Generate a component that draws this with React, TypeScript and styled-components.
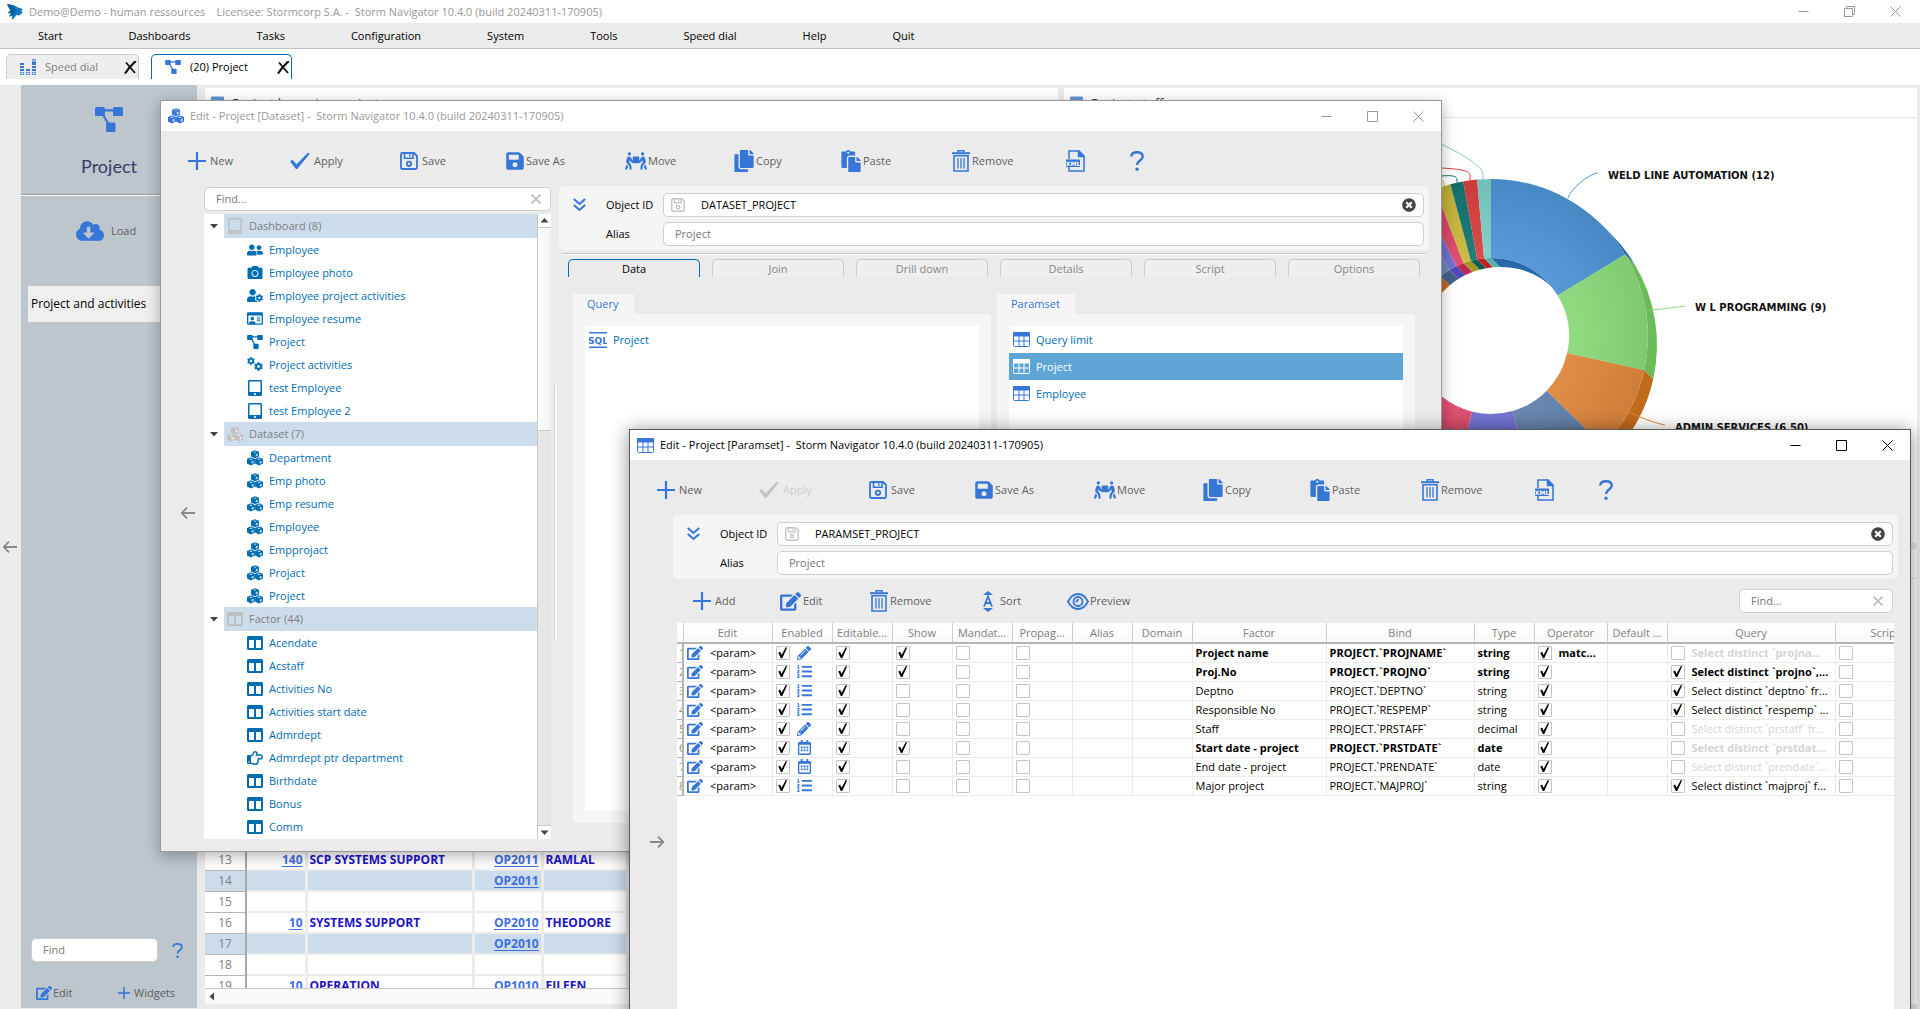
import React from "react";
import styled, { createGlobalStyle, css } from "styled-components";
import {
  FaSave, FaPeopleCarry, FaCopy, FaPaste, FaCloudDownloadAlt,
  FaEdit, FaTabletAlt, FaUserFriends, FaCamera, FaUserCog, FaRegIdCard, FaColumns,
  FaRegHandPointRight, FaPencilAlt, FaListOl, FaRegCalendarAlt, FaTimesCircle, FaCog,
} from "react-icons/fa";

const BLUE = "#3676d8";
const LINK = "#006db3";
const GREY = "#ebebeb";
const PALE = "#ccdceb";
const LINE = "#cfcfcf";

const Global = createGlobalStyle`
  *, *::before, *::after { box-sizing: border-box; }
  body { margin: 0; background: ${GREY}; color: #000; overflow: hidden;
    font: 11px/16px "Open Sans", "Noto Sans", sans-serif; }
  button, input { font: inherit; color: inherit; }
  button { border: 0; background: none; padding: 0; }
  svg { display: block; flex: none; }
`;

/* ---------- drawn icons ---------- */
const Plus = ({ size = 18 }) => (
  <svg width={size} height={size} viewBox="0 0 18 18" stroke="currentColor" strokeWidth="2.2"><path d="M9 0v18M0 9h18" /></svg>
);
const Tick = () => (
  <svg width="20" height="16" viewBox="0 0 20 16" fill="currentColor"><path d="M0 8.6l2.4-1.9 4.2 4.6L17.600 0 20 .6 7.200 16H6z" /></svg>
);
const Bin = () => (
  <svg width="18" height="22" viewBox="0 0 18 22" fill="none" stroke="currentColor">
    <path d="M0 3.200h18" strokeWidth="2" /><path d="M6 2.500V.7h6v1.800" strokeWidth="1.400" />
    <path d="M2 5.700h14v15.300H2z" strokeWidth="1.600" /><path d="M6 8v10.500M9 8v10.500M12 8v10.500" strokeWidth="1.300" />
  </svg>
);
const Floppy = ({ size = 18 }) => (
  <svg width={size} height={size} viewBox="0 0 18 18" fill="none" stroke="currentColor" strokeWidth="1.800">
    <path d="M1 2.200Q1 1 2.200 1H14l3 3v11.800q0 1.200-1.200 1.200H2.200Q1 17 1 15.800z" strokeLinejoin="round" />
    <path d="M4.500 1v5.200h8.500V1M9.800 2.500v2" strokeWidth="1.600" /><circle cx="9" cy="11.800" r="2.200" />
  </svg>
);
const Nodes = ({ size = 16 }) => (
  <svg width={size} height={Math.round(size * 0.9)} viewBox="0 0 28 25" fill="currentColor">
    <rect width="10" height="9" rx="1.500" /><rect x="18" width="10" height="9" rx="1.500" /><rect x="11" y="15.500" width="9.500" height="9.500" rx="1.500" />
    <path d="M9 3.400h10M7.500 7l6 10" stroke="currentColor" strokeWidth="2.200" fill="none" />
  </svg>
);
const Gears = () => (
  <svg width="16" height="15" viewBox="0 0 16 15"><FaCog x={0} y={0} size={8} /><FaCog x={7} y={5} size={9} /></svg>
);
const Cube = ({ x, y }: { x: number; y: number }) => (
  <g transform={`translate(${x} ${y})`}>
    <path d="M4.300 0l4.300 1.800v5L4.300 8.800 0 6.800v-5z" fill="currentColor" />
    <path d="M4.300 1.300l2 .8-2 .8-2-.8zM5.100 7V4.600l2-.9v2.400z" fill="#fff" fillOpacity=".8" />
  </g>
);
const Cubes = ({ size = 16 }) => (
  <svg width={size} height={size} viewBox="0 0 17.400 17"><Cube x={4.400} y={0} /><Cube x={0} y={7.800} /><Cube x={8.800} y={7.800} /></svg>
);
const Help = ({ w = 14, h = 20 }) => (
  <svg width={w} height={h} viewBox="0 0 14 20" fill="none" stroke="currentColor" strokeWidth="2.400">
    <path d="M1.200 5.500C1.500 2.600 3.900 1.200 7 1.200c3.400 0 5.700 1.700 5.700 4.300 0 4.200-5.600 4-5.600 8.500" />
    <circle cx="7" cy="18.200" r="1.700" fill="currentColor" stroke="none" />
  </svg>
);
const XmlFile = () => (
  <svg width="19" height="22" viewBox="0 0 19 22" fill="none" stroke="currentColor" strokeWidth="1.500">
    <path d="M3 9V1h10l5 5v15H3v-4" /><path d="M12.500 1v5.500H18z" fill="currentColor" />
    <rect x="0" y="9.500" width="14" height="7.500" fill="currentColor" stroke="none" />
    <text x="7" y="15.500" textAnchor="middle" fontSize="6" fontWeight="700" fill="#fff" stroke="none" fontFamily="DejaVu Sans">XML</text>
  </svg>
);
const GridIcon = ({ w = 17, h = 15 }) => (
  <svg width={w} height={h} viewBox="0 0 17 15" fill="none" stroke="currentColor" strokeWidth="1">
    <rect x=".5" y=".5" width="16" height="14" rx="1" /><path d="M.5.5h16v3.500H.5z" fill="currentColor" />
    <path d="M6 4v10.500M11 4v10.500M.5 9h16" />
  </svg>
);
const Chevrons = () => (
  <svg width="13" height="14" viewBox="0 0 13 14" fill="none" stroke={BLUE} strokeWidth="2"><path d="M.8 1l5.700 5 5.700-5M.8 7l5.700 5 5.700-5" /></svg>
);
const Arrow = ({ flip = false }) => (
  <svg width="14" height="12" viewBox="0 0 14 12" fill="none" stroke="#888" strokeWidth="1.800">
    <path d={flip ? "M0 6h13M8 .6L13.200 6 8 11.400" : "M14 6H1M6 .6L.8 6 6 11.400"} />
  </svg>
);
const Cross = ({ color = "#bdbdbd", size = 10 }) => (
  <svg width={size} height={size} viewBox="0 0 10 10" stroke={color} strokeWidth="1.700"><path d="M.5.5l9 9M9.500.5l-9 9" /></svg>
);
const TabCross = () => (
  <svg width="13" height="13" viewBox="0 0 13 13" fill="none" stroke="#111"><path d="M2 1.500L11 12" strokeWidth="1.800" /><path d="M11.800 0C8 3.500 4 8 1 12.500" strokeWidth="2.200" /></svg>
);
const SortIcon = () => (
  <svg width="12" height="21" viewBox="0 0 12 21" fill="currentColor">
    <path d="M6 0l5 4H1zM6 21l5-4H1z" /><path d="M2 15.500L6 5.500l4 10M3.600 12h4.800" fill="none" stroke="currentColor" strokeWidth="1.800" />
  </svg>
);
const EyeIcon = () => (
  <svg width="22" height="19" viewBox="0 0 22 17" fill="none" stroke="currentColor" strokeWidth="1.800">
    <path d="M1 8.500C3.500 3.500 7 1 11 1s7.500 2.500 10 7.500c-2.500 5-6 7.500-10 7.500S3.500 13.500 1 8.500z" /><circle cx="11" cy="8.500" r="4.500" />
    <path d="M8.600 8.500A2.400 2.400 0 0 0 11 6" />
  </svg>
);
const DialIcon = () => (
  <svg width="16" height="16" viewBox="0 0 16 16" fill={BLUE}>
    <path d="M0 4h4v2H0zM0 7h4v2H0zM0 10h4v2H0zM6 10h4v2H6zM12 3h4v3h-4zM12 7h4v2h-4zM12 10h4v2h-4z" />
    <path d="M.4 13.400h3.200v2.200H.4zM6.400 13.400h3.200v2.200H6.400zM12.400 13.400h3.200v2.200h-3.200zM12.400.4h3.200v2h-3.200z" fill="none" stroke={BLUE} strokeWidth=".8" />
  </svg>
);
const Logo = () => (
  <svg width="16" height="16" viewBox="0 0 16 16">
    <path d="M0 0c4 .5 8 1 11 3.500L16 5l-1.500 1.500L15.500 9 12 11.500 9.500 11 6 15.500 4.500 14l1-2L2 12.500l2-3L.5 8.500l3-1.500L0 0z" fill="#1a78c0" />
    <path d="M0 0c4 .5 8 2 9 6.500L7.500 10 2 12.500l2-3L.5 8.500l3-1.500z" fill="#0a5fa0" />
  </svg>
);
const SqlIcon = () => (
  <svg width="18" height="16" viewBox="0 0 18 16" fill="none" stroke={BLUE}>
    <path d="M0 .8h18M0 15.200h18" strokeWidth="1.400" />
    <text x="9" y="12" textAnchor="middle" fontSize="9" fontWeight="700" fill={BLUE} stroke="none" fontFamily="DejaVu Sans">SQL</text>
  </svg>
);

/* ---------- shared parts ---------- */
const TitleBar = styled.header<{ $h: number; $color: string }>`
  display: flex; align-items: center; height: ${(p) => p.$h}px; flex: none; background: #fff;
  color: ${(p) => p.$color}; white-space: pre; padding-left: 7px; gap: 6px;
`;
const TitleIcon = styled.span`color: ${BLUE};`;
const TitleText = styled.span`flex: 1;`;
const CaptionButton = styled.button`
  width: 46px; height: 22px; display: flex; align-items: center; justify-content: center; margin: 0;
`;
const CaptionGroup = styled.div<{ $inset?: number }>`display: flex; padding-right: ${(p) => p.$inset || 0}px;`;

function Captions({ restored = false, inset = 0 }) {
  const s = { width: 11, height: 11, viewBox: "0 0 11 11", fill: "none", stroke: "currentColor" };
  return (
    <CaptionGroup $inset={inset}>
      <CaptionButton aria-label="Minimise"><svg {...s}><path d="M.5 5.500h10" /></svg></CaptionButton>
      <CaptionButton aria-label="Maximise">
        <svg {...s}><path d={restored ? "M.5 2.500h8v8h-8zM2.500 2.500v-2h8v8h-2" : "M.5.5h10v10H.5z"} /></svg>
      </CaptionButton>
      <CaptionButton aria-label="Close"><svg {...s}><path d="M.5.5l10 10M10.500.5l-10 10" /></svg></CaptionButton>
    </CaptionGroup>
  );
}

const ToolBar = styled.div<{ $cols: string; $h: number; $pad: number; $top?: number }>`
  display: grid; grid-template-columns: ${(p) => p.$cols}; align-items: center; flex: none;
  height: ${(p) => p.$h}px; padding-left: ${(p) => p.$pad}px; padding-top: ${(p) => p.$top || 0}px; color: ${BLUE};
`;
const ToolButton = styled.button<{ $gap: number }>`
  display: flex; align-items: center; gap: ${(p) => p.$gap}px; white-space: nowrap; justify-self: start;
  &:disabled { color: #c4c4c4; }
`;
const ToolLabel = styled.span`color: #5f5f5f; button:disabled & { color: #cfcfcf; }`;

const Tool = ({ icon, label, gap = 4, disabled = false, name }: { icon: React.ReactNode; label?: string; gap?: number; disabled?: boolean; name?: string }) => (
  <ToolButton $gap={gap} disabled={disabled} aria-label={name}>{icon}{label && <ToolLabel>{label}</ToolLabel>}</ToolButton>
);

const boxed = css`border: 1px solid ${LINE}; border-radius: 5px; background: #fff;`;
const Field = styled.div<{ $w?: number }>`
  ${boxed} display: flex; align-items: center; height: 24px; padding: 0 9px 0 7px; min-width: 0;
  width: ${(p) => (p.$w ? p.$w + "px" : "auto")};
`;
const FieldInput = styled.input<{ $pad: number; $muted?: boolean }>`
  flex: 1; min-width: 0; border: 0; outline: 0; background: none; padding: 0 0 0 ${(p) => p.$pad}px;
  color: ${(p) => (p.$muted ? "#777" : "#000")}; &::placeholder { color: #777; opacity: 1; }
`;
const FieldIcon = styled.span`color: #c4c4c4;`;
const PlainButton = styled.button`display: flex;`;

/* ---------- main window ---------- */
const Screen = styled.div`position: relative; height: 100vh; display: flex; flex-direction: column; overflow: hidden;`;
const MenuBar = styled.nav`
  display: flex; align-items: center; gap: 66px; height: 26px; flex: none; padding-left: 38px;
  background: ${GREY}; border-bottom: 1px solid #c2c2c2;
`;
const PageTabs = styled.div`display: flex; gap: 12px; align-items: flex-start; height: 36px; flex: none; padding: 5px 6px 0; background: #fff;`;
const PageTab = styled.div<{ $active?: boolean; $w: number }>`
  display: flex; align-items: center; width: ${(p) => p.$w}px; height: 25px; padding: 0 1px 0 13px;
  border: 1px solid ${(p) => (p.$active ? LINK : "#ccc")}; border-bottom: 0; border-radius: 5px 5px 0 0;
  background: ${(p) => (p.$active ? "#fff" : "#eee")}; color: ${(p) => (p.$active ? "#000" : "#808080")};
`;
const PageTabIcon = styled.span`color: ${BLUE};`;
const PageTabLabel = styled.button`flex: 1; text-align: left; padding-left: 9px;`;
const Desk = styled.div`flex: 1; min-height: 0; display: flex; padding-bottom: 1px;`;
const Strip = styled.div<{ $w: number; $right: number }>`
  width: ${(p) => p.$w}px; flex: none; display: flex; align-items: center; justify-content: flex-end; padding-right: ${(p) => p.$right}px;
`;
const SideBar = styled.aside`width: 176px; flex: none; background: #bdc5cd; display: flex; flex-direction: column;`;
const SideHead = styled.div`
  display: flex; flex-direction: column; align-items: center; gap: 22px; height: 111px; padding-top: 22px; color: ${BLUE};
  border-bottom: 1px solid #fff; box-shadow: inset 0 -1px 0 #9b9b9b;
`;
const SideTitle = styled.h1`margin: 0; font: 400 18px/24px Lato, "Open Sans", sans-serif; color: #3a3a66;`;
const LoadButton = styled.button`display: flex; align-items: center; gap: 7px; height: 70px; padding-left: 55px; color: ${BLUE};`;
const SideItem = styled.button`margin: 20px 0 0 7px; height: 36px; padding-left: 3px; text-align: left; background: #efefef; font-size: 12px;`;
const SideFoot = styled.div`margin-top: auto; padding: 0 14px 7px 10px; display: flex; flex-direction: column; gap: 23px; color: ${BLUE};`;
const SideRow = styled.div<{ $l?: number; $r?: number }>`
  display: flex; align-items: center; justify-content: space-between; padding: 0 ${(p) => p.$r || 0}px 0 ${(p) => p.$l || 0}px;
`;
const Boards = styled.main`
  flex: 1; min-width: 0; display: grid; grid-template: 1fr 1fr / 1fr 1fr; gap: 6px; padding: 3px 3px 4px 8px;
`;
const Board = styled.section`display: flex; flex-direction: column; background: #fff; overflow: hidden; min-width: 0; min-height: 0;`;
const BoardHead = styled.h2`
  display: flex; align-items: center; gap: 8px; height: 30px; flex: none; margin: 0; padding-left: 6px;
  border-bottom: 1px solid #e6e6e6; font: 13px/18px "Open Sans", sans-serif; color: #2f2f5e; svg { color: #5f90dc; }
`;

const Scroll = styled.div`flex: 1; min-height: 0; overflow: hidden;`;
const Sheet = styled.table`
  border-collapse: collapse; table-layout: fixed; width: 853px; font-size: 12px;
  th, td { height: 21px; padding: 0 2px; border: solid #ececec; border-width: 0 3px 2px 0; overflow: hidden; white-space: nowrap; }
  thead th { height: 18px; border-width: 0; }
  tbody th { border-right: 2px solid #a9a9a9; border-bottom: 1px solid #b5b5b5; font-weight: 400; color: #808080; text-align: center; }
  td { font-weight: 700; color: #1b12c9; text-align: left; }
`;
const SheetRow = styled.tr<{ $tint: boolean }>`${(p) => p.$tint && css`background: ${PALE};`}`;
const SheetCell = styled.td<{ $right?: boolean }>`&& { text-align: ${(p) => (p.$right ? "right" : "left")}; }`;
const SheetLink = styled.a`color: #3f6fe0; text-decoration: underline; text-underline-offset: 2px;`;
const HScroll = styled.div`
  height: 16px; flex: none; display: flex; align-items: center; border-top: 1px solid #c8c8c8; background: #fafafa; padding-left: 3px;
`;
const Tri = styled.span<{ $dir: "up" | "down" | "left" }>`
  width: 8px; height: 8px; background: #444;
  clip-path: ${(p) => ({ up: "polygon(50% 20%,100% 75%,0 75%)", down: "polygon(0 25%,100% 25%,50% 80%)", left: "polygon(75% 0,75% 100%,20% 50%)" }[p.$dir])};
`;

type SRow = [string, string, string, string];
const emptyRow: SRow = ["", "", "", ""];
const sheetRows: SRow[] = [
  ...Array(12).fill(emptyRow),
  ["140", "SCP SYSTEMS SUPPORT", "OP2011", "RAMLAL"],
  ["", "", "OP2011", ""],
  emptyRow,
  ["10", "SYSTEMS SUPPORT", "OP2010", "THEODORE"],
  ["", "", "OP2010", ""],
  emptyRow,
  ["10", "OPERATION", "OP1010", "EILEEN"],
];

/* ---------- donut chart ---------- */
const ChartText = styled.text`font: 700 10px "DejaVu Sans", sans-serif; fill: #111;`;
const CX = 427, CY = 218, RO = 157, RI = 78, DEPTH = 9;
const palette: Record<string, [string, string]> = {
  blue: ["#4d92d4", "#2668a8"], green: ["#89d878", "#6cbb5b"], orange: ["#df863c", "#c26a1c"], slate: ["#5f80aa", "#44648c"],
  violet: ["#6b6bd0", "#5048b8"], pink: ["#dd4569", "#bd2850"], yellow: ["#c9b738", "#a9981f"], teal: ["#147572", "#0c5c59"],
  red: ["#db3e3e", "#c02020"], mint: ["#7acdc4", "#56b5aa"],
};
const slices: [string, number, number][] = [
  ["blue", 0, 58.7], ["green", 58.7, 102.6], ["orange", 102.6, 134.5], ["slate", 134.5, 164], ["violet", 164, 194],
  ["pink", 194, 219], ["yellow", 219, 240], ["teal", 240, 258], ["red", 258, 272], ["mint", 272, 285], ["blue", 285, 297],
  ["green", 297, 308], ["orange", 308, 320], ["slate", 320, 328], ["violet", 328, 333.7], ["pink", 333.7, 339.3],
  ["yellow", 339.3, 345], ["teal", 345, 349.8], ["red", 349.8, 354.9], ["mint", 354.9, 360],
];
const pt = (r: number, a: number, o = 0) => {
  const t = (a * Math.PI) / 180;
  return `${CX + o + r * Math.sin(t)} ${CY + o - r * Math.cos(t)}`;
};
const face = (a: number, b: number) =>
  `M${pt(RO, a)}A${RO} ${RO} 0 0 1 ${pt(RO, b)}L${pt(RI, b)}A${RI} ${RI} 0 0 0 ${pt(RI, a)}Z`;
const wall = (r: number, a: number, b: number) =>
  `M${pt(r, a)}A${r} ${r} 0 0 1 ${pt(r, b)}L${pt(r, b, DEPTH)}A${r} ${r} 0 0 0 ${pt(r, a, DEPTH)}Z`;

const Donut = () => (
  <svg width="853" height="425" viewBox="0 0 853 425" role="img" aria-label="Project staff by department">
    <defs>
      <radialGradient id="shade" gradientUnits="userSpaceOnUse" cx={CX} cy={CY} r={RO}>
        <stop offset=".5" stopColor="#fff" stopOpacity=".06" /><stop offset="1" stopColor="#000" stopOpacity=".07" />
      </radialGradient>
    </defs>
    {slices.filter(([, a, b]) => b > 45 && a < 225).map(([c, a, b]) => (
      <path key={"o" + a} d={wall(RO, Math.max(a, 45), Math.min(b, 225))} fill={palette[c][1]} />
    ))}
    <path d={wall(RI, 0, 45)} fill={palette.blue[1]} />
    {slices.filter(([, , b]) => b > 225).map(([c, a, b]) => (
      <path key={"i" + a} d={wall(RI, Math.max(a, 225), b)} fill={palette[c][1]} />
    ))}
    {slices.map(([c, a, b]) => <path key={"f" + a} d={face(a, b)} fill={palette[c][0]} />)}
    <path d={face(0, 180) + face(180, 360)} fill="url(#shade)" />
    <g fill="none" strokeWidth="1">
      <path d="M377 26C400 37 419 49 419 56v6" stroke={palette.mint[0]} />
      <path d="M377 50c20 1 29 3 29 7v6" stroke={palette.red[0]} />
      <path d="M377 58c12-1 16 0 16 4v4" stroke={palette.teal[0]} />
      <path d="M377 62c3 0 3 4 3 6" stroke={palette.yellow[0]} />
      <path d="M504 80c2-8 20-24 30-25" stroke={palette.blue[0]} />
      <path d="M581 193l40-5" stroke={palette.green[0]} />
      <path d="M564 293c8 5 26 12 37 14" stroke={palette.orange[0]} />
    </g>
    <ChartText x="544" y="61">WELD LINE AUTOMATION (12)</ChartText>
    <ChartText x="631" y="193">W L PROGRAMMING (9)</ChartText>
    <ChartText x="611" y="313">ADMIN SERVICES (6.50)</ChartText>
  </svg>
);

/* ---------- dialogs ---------- */
const Dialog = styled.section<{ $front?: boolean }>`
  position: absolute; width: 1282px; height: 752px; display: flex; flex-direction: column; background: ${GREY};
  border: 1px solid ${(p) => (p.$front ? "#5a5a5a" : "#999")};
  box-shadow: ${(p) => (p.$front ? "0 2px 18px rgba(0,0,0,.45)" : "0 4px 14px rgba(0,0,0,.3)")};
  ${(p) => (p.$front ? css`left: 629px; top: 429px;` : css`left: 160px; top: 100px;`)}
`;
const DialogBody = styled.div`flex: 1; min-height: 0; display: flex; padding: 0 12px 12px 0;`;
const Column = styled.div`flex: 1; min-width: 0; display: flex; flex-direction: column;`;

const FormPanel = styled.div`
  display: grid; grid-template: 24px 24px / 33px 57px 1fr; gap: 5px 0; align-items: center;
  padding: 7px 5px 4px 14px; background: #f5f5f5; border-radius: 5px; flex: none;
`;
const FormLabel = styled.label`grid-column: 2;`;
const FormField = styled(Field)`grid-column: 3; padding-right: 7px;`;

function IdForm({ id, value }: { id: string; value: string }) {
  return (
    <FormPanel>
      <PlainButton aria-label="Expand"><Chevrons /></PlainButton>
      <FormLabel htmlFor={id + "-id"}>Object ID</FormLabel>
      <FormField>
        <FieldIcon><Floppy size={14} /></FieldIcon>
        <FieldInput id={id + "-id"} $pad={16} defaultValue={value} />
        <PlainButton aria-label="Clear"><FaTimesCircle size={14} color="#444" /></PlainButton>
      </FormField>
      <FormLabel htmlFor={id + "-alias"}>Alias</FormLabel>
      <FormField><FieldInput id={id + "-alias"} $pad={4} $muted defaultValue="Project" /></FormField>
    </FormPanel>
  );
}

const mainCols = "102px 110px 105px 120px 108px 107px 112px 114px 64px 1fr";
const MainTools = ({ applyOff = false }) => (
  <ToolBar $cols={mainCols} $h={55} $pad={27} $top={4}>
    <Tool icon={<Plus />} label="New" />
    <Tool icon={<Tick />} label="Apply" disabled={applyOff} />
    <Tool icon={<Floppy />} label="Save" />
    <Tool icon={<FaSave size={20} />} label="Save As" gap={1} />
    <Tool icon={<FaPeopleCarry size={22} />} label="Move" gap={1} />
    <Tool icon={<FaCopy size={22} />} label="Copy" gap={1} />
    <Tool icon={<FaPaste size={22} />} label="Paste" gap={1} />
    <Tool icon={<Bin />} label="Remove" gap={2} />
    <Tool icon={<XmlFile />} name="XML" />
    <Tool icon={<Help />} name="Help" />
  </ToolBar>
);

/* tree */
const TreeColumn = styled.div`width: 347px; flex: none; display: flex; flex-direction: column; gap: 3px; padding-top: 1px;`;
const TreeFrame = styled.div`flex: 1; min-height: 0; display: flex; background: #fff;`;
const TreeList = styled.ul`flex: 1; margin: 0; padding: 0; list-style: none; overflow: hidden; color: ${LINK};`;
const TreeGroup = styled.li`
  display: flex; align-items: center; height: 24px; padding-left: 6px; color: #808080;
  background: linear-gradient(90deg, #fff 20px, ${PALE} 20px);
`;
const TreeGroupLabel = styled.span`display: flex; align-items: center; gap: 6px; padding-left: 9px; > svg { color: #c0c0c0; width: 16px; }`;
const TreeLeaf = styled.li`display: flex; align-items: center; gap: 6px; height: 23px; padding-left: 43px; > svg { width: 16px; }`;
const VScroll = styled.div`
  width: 14px; flex: none; border-left: 1px solid #c8c8c8; display: flex; flex-direction: column; background: #e6e6e6;
`;
const VButton = styled.button`height: 14px; flex: none; display: flex; align-items: center; justify-content: center; background: #fff; border: solid #c8c8c8; border-width: 0 0 1px;
  &:last-child { border-width: 1px 0 0; }`;
const VThumb = styled.div`height: 34%; background: linear-gradient(90deg, #fff, #f2f2f2); border-bottom: 1px solid #c8c8c8;`;
const VTrack = styled.div`flex: 1; min-height: 0;`;
const Splitter = styled.div`width: 8px; flex: none; display: flex; align-items: center; justify-content: center;
  &::before { content: ""; width: 3px; height: 255px; border: solid #d6d6d6; border-width: 0 0 0 1px; background: #f7f7f7; }`;

const groups: { name: string; icon: React.ReactNode; items: [string, React.ReactNode][] }[] = [
  {
    name: "Dashboard (8)", icon: <FaTabletAlt size={16} />,
    items: [
      ["Employee", <FaUserFriends size={16} />], ["Employee photo", <FaCamera size={15} />],
      ["Employee project activities", <FaUserCog size={15} />], ["Employee resume", <FaRegIdCard size={15} />],
      ["Project", <Nodes />], ["Project activities", <Gears />],
      ["test Employee", <FaTabletAlt size={16} />], ["test Employee 2", <FaTabletAlt size={16} />],
    ],
  },
  {
    name: "Dataset (7)", icon: <Cubes />,
    items: ["Department", "Emp photo", "Emp resume", "Employee", "Empprojact", "Projact", "Project"].map((n) => [n, <Cubes />]),
  },
  {
    name: "Factor (44)", icon: <FaColumns size={16} />,
    items: ["Acendate", "Acstaff", "Activities No", "Activities start date", "Admrdept", "Admrdept ptr department", "Birthdate", "Bonus", "Comm"].map(
      (n) => [n, n.includes("ptr") ? <FaRegHandPointRight size={16} /> : <FaColumns size={16} />]
    ),
  },
];

const Rule = styled.hr`margin: 3px 3px 4px; width: auto; border: 0; border-top: 1px solid #c2c2c2; border-bottom: 1px solid #fff; height: 2px; flex: none;`;
const FormTabs = styled.div`display: flex; gap: 12px; padding: 0 9px;`;
const FormTab = styled.button<{ $active?: boolean }>`
  flex: 1; height: 18px; border: 1px solid ${(p) => (p.$active ? LINK : "#ccc")}; border-bottom: 0; border-radius: 5px 5px 0 0;
  color: ${(p) => (p.$active ? "#000" : "#888")}; background: ${(p) => (p.$active ? "none" : "#eee")};
`;
const GroupRow = styled.div`flex: 1; min-height: 0; display: flex; gap: 6px; padding: 17px 14px 16px;`;
const GroupBox = styled.div`flex: 1; display: flex; flex-direction: column; align-items: flex-start;`;
const GroupName = styled.h3`margin: 0; padding: 0 15px 0 14px; font: inherit; line-height: 20px; color: ${BLUE}; background: #f5f5f5;`;
const GroupPanel = styled.div`align-self: stretch; flex: 1; padding: 12px; background: #f5f5f5; border-radius: 0 3px 3px 3px; display: flex;`;
const ItemList = styled.ul`flex: 1; margin: 0; padding: 0; list-style: none; background: #fff;`;
const Item = styled.li<{ $on?: boolean }>`
  display: flex; align-items: center; gap: 6px; height: 27px; padding-left: 4px;
  color: ${(p) => (p.$on ? "#fff" : LINK)}; background: ${(p) => (p.$on ? "#5fa5d5" : "none")};
  svg { color: ${(p) => (p.$on ? "#fff" : BLUE)}; }
`;

/* parameter grid */
const Grid = styled.div`flex: 1; min-height: 0; overflow: hidden; background: #fff; margin: 0 4px;`;
const ParamTable = styled.table`
  border-collapse: collapse; table-layout: fixed; width: 1258px;
  th, td { height: 19px; padding: 0 3px; border: solid #ececec; border-width: 0 1px 1px 0; overflow: hidden; white-space: nowrap; text-overflow: ellipsis; text-align: left; line-height: 16px; }
  thead th { height: 20px; font-weight: 400; color: #808080; text-align: center; border-right-color: #cfcfcf; border-bottom: 2px solid #b5b5b5; background: linear-gradient(#fff, #f8f8f8); }
  tbody th { padding: 0 0 0 2px; font-weight: 400; color: #a08878; text-overflow: clip; border-right: 2px solid #b5b5b5; border-bottom-color: #b5b5b5; }
`;
const ParamRow = styled.tr<{ $bold: boolean }>`font-weight: ${(p) => (p.$bold ? 700 : 400)};`;
const Cell = styled.span<{ $dim?: boolean; $plain?: boolean }>`
  display: flex; align-items: center; gap: 7px; color: ${(p) => (p.$dim ? "#d4d4d4" : "#000")};
  font-weight: ${(p) => (p.$plain ? 400 : "inherit")}; svg { color: ${BLUE}; }
`;
const Clip = styled.span`min-width: 0; overflow: hidden; text-overflow: ellipsis;`;
const Check = styled.input.attrs({ type: "checkbox" })`
  appearance: none; flex: none; width: 14px; height: 14px; margin: 0; border: 1px solid #c4c4c4; background: #fff; border-radius: 1px; display: block;
  &:checked::before { content: ""; display: block; width: 12px; height: 12px; background: #000;
    clip-path: polygon(15% 50%, 30% 42%, 42% 68%, 78% 5%, 88% 8%, 48% 95%, 36% 95%); }
`;

const colWidths = [6, 89, 60, 60, 60, 60, 60, 60, 60, 134, 148, 60, 73, 60, 168, 100];
const colNames = ["", "Edit", "Enabled", "Editable...", "Show", "Mandat...", "Propag...", "Alias", "Domain", "Factor", "Bind", "Type", "Operator", "Default ...", "Query", "Script"];
type Kind = "pencil" | "list" | "date";
const kinds: Record<Kind, React.ReactNode> = { pencil: <FaPencilAlt size={14} />, list: <FaListOl size={15} />, date: <FaRegCalendarAlt size={15} /> };
const params: { kind: Kind; show: boolean; factor: string; bind: string; type: string; op?: string; q: boolean; query: string }[] = [
  { kind: "pencil", show: true, factor: "Project name", bind: "PROJNAME", type: "string", op: "matc...", q: false, query: "Select distinct `projna..." },
  { kind: "list", show: true, factor: "Proj.No", bind: "PROJNO", type: "string", q: true, query: "Select distinct `projno`,..." },
  { kind: "list", show: false, factor: "Deptno", bind: "DEPTNO", type: "string", q: true, query: "Select distinct `deptno` fr..." },
  { kind: "list", show: false, factor: "Responsible No", bind: "RESPEMP", type: "string", q: true, query: "Select distinct `respemp` ..." },
  { kind: "pencil", show: false, factor: "Staff", bind: "PRSTAFF", type: "decimal", q: false, query: "Select distinct `prstaff` fr..." },
  { kind: "date", show: true, factor: "Start date - project", bind: "PRSTDATE", type: "date", q: false, query: "Select distinct `prstdat..." },
  { kind: "date", show: false, factor: "End date - project", bind: "PRENDATE", type: "date", q: false, query: "Select distinct `prendate`..." },
  { kind: "list", show: false, factor: "Major project", bind: "MAJPROJ", type: "string", q: true, query: "Select distinct `majproj` f..." },
];

const DatasetDialog = () => (
  <Dialog aria-label="Edit dataset">
    <TitleBar $h={30} $color="#999">
      <TitleIcon><Cubes /></TitleIcon>
      <TitleText>{"Edit - Project [Dataset] -  Storm Navigator 10.4.0 (build 20240311-170905)"}</TitleText>
      <Captions />
    </TitleBar>
    <MainTools />
    <DialogBody>
      <Strip $w={43} $right={9}><Arrow /></Strip>
      <TreeColumn>
        <Field>
          <FieldInput $pad={4} placeholder="Find..." aria-label="Find object" />
          <PlainButton aria-label="Clear search"><Cross /></PlainButton>
        </Field>
        <TreeFrame>
          <TreeList>
            {groups.map((g) => (
              <React.Fragment key={g.name}>
                <TreeGroup><Tri $dir="down" /><TreeGroupLabel>{g.icon}{g.name}</TreeGroupLabel></TreeGroup>
                {g.items.map(([n, icon]) => <TreeLeaf key={n}>{icon}{n}</TreeLeaf>)}
              </React.Fragment>
            ))}
          </TreeList>
          <VScroll>
            <VButton aria-label="Scroll up"><Tri $dir="up" /></VButton>
            <VTrack><VThumb /></VTrack>
            <VButton aria-label="Scroll down"><Tri $dir="down" /></VButton>
          </VScroll>
        </TreeFrame>
      </TreeColumn>
      <Splitter />
      <Column>
        <IdForm id="dataset" value="DATASET_PROJECT" />
        <Rule />
        <FormTabs>
          {["Data", "Join", "Drill down", "Details", "Script", "Options"].map((t, i) => <FormTab key={t} $active={i === 0}>{t}</FormTab>)}
        </FormTabs>
        <GroupRow>
          <GroupBox>
            <GroupName>Query</GroupName>
            <GroupPanel><ItemList><Item><SqlIcon />Project</Item></ItemList></GroupPanel>
          </GroupBox>
          <GroupBox>
            <GroupName>Paramset</GroupName>
            <GroupPanel>
              <ItemList>
                <Item><GridIcon />Query limit</Item>
                <Item $on><GridIcon />Project</Item>
                <Item><GridIcon />Employee</Item>
              </ItemList>
            </GroupPanel>
          </GroupBox>
        </GroupRow>
      </Column>
    </DialogBody>
  </Dialog>
);

const FindSlot = styled.div`justify-self: end; padding-right: 5px;`;

const ParamsetDialog = () => (
  <Dialog $front aria-label="Edit paramset">
    <TitleBar $h={30} $color="#000">
      <TitleIcon><GridIcon /></TitleIcon>
      <TitleText>{"Edit - Project [Paramset] -  Storm Navigator 10.4.0 (build 20240311-170905)"}</TitleText>
      <Captions />
    </TitleBar>
    <MainTools applyOff />
    <DialogBody>
      <Strip $w={43} $right={9}><Arrow flip /></Strip>
      <Column>
        <IdForm id="paramset" value="PARAMSET_PROJECT" />
        <ToolBar $cols="87px 90px 112px 85px 85px 1fr" $h={44} $pad={20}>
          <Tool icon={<Plus />} label="Add" />
          <Tool icon={<FaEdit size={21} />} label="Edit" gap={2} />
          <Tool icon={<Bin />} label="Remove" gap={2} />
          <Tool icon={<SortIcon />} label="Sort" gap={6} />
          <Tool icon={<EyeIcon />} label="Preview" gap={1} />
          <FindSlot>
            <Field $w={154}>
              <FieldInput $pad={4} placeholder="Find..." aria-label="Find parameter" />
              <PlainButton aria-label="Clear search"><Cross /></PlainButton>
            </Field>
          </FindSlot>
        </ToolBar>
        <Grid>
          <ParamTable>
            <colgroup>{colWidths.map((w, i) => <col key={i} width={w} />)}</colgroup>
            <thead><tr>{colNames.map((n, i) => <th key={i}>{n}</th>)}</tr></thead>
            <tbody>
              {params.map((p, i) => (
                <ParamRow key={p.bind} $bold={p.show}>
                  <th>{i + 1}</th>
                  <td><Cell $plain><FaEdit size={16} />&lt;param&gt;</Cell></td>
                  <td><Cell><Check defaultChecked aria-label={p.factor + " enabled"} />{kinds[p.kind]}</Cell></td>
                  <td><Check defaultChecked aria-label={p.factor + " editable"} /></td>
                  <td><Check defaultChecked={p.show} aria-label={p.factor + " show"} /></td>
                  <td><Check aria-label={p.factor + " mandatory"} /></td>
                  <td><Check aria-label={p.factor + " propagate"} /></td>
                  <td /><td />
                  <td>{p.factor}</td>
                  <td>{"PROJECT.`" + p.bind + "`"}</td>
                  <td>{p.type}</td>
                  <td><Cell><Check defaultChecked aria-label={p.factor + " operator"} />{p.op}</Cell></td>
                  <td />
                  <td><Cell $dim={!p.q}><Check defaultChecked={p.q} aria-label={p.factor + " query"} /><Clip>{p.query}</Clip></Cell></td>
                  <td><Check aria-label={p.factor + " script"} /></td>
                </ParamRow>
              ))}
            </tbody>
          </ParamTable>
        </Grid>
      </Column>
    </DialogBody>
  </Dialog>
);

export default function App() {
  return (
    <Screen>
      <Global />
      <TitleBar $h={23} $color="#999">
        <Logo />
        <TitleText>{"Demo@Demo - human ressources    Licensee: Stormcorp S.A. -  Storm Navigator 10.4.0 (build 20240311-170905)"}</TitleText>
        <Captions restored inset={2} />
      </TitleBar>
      <MenuBar>
        {["Start", "Dashboards", "Tasks", "Configuration", "System", "Tools", "Speed dial", "Help", "Quit"].map((m) => <button key={m}>{m}</button>)}
      </MenuBar>
      <PageTabs>
        <PageTab $w={133}><DialIcon /><PageTabLabel>Speed dial</PageTabLabel><PlainButton aria-label="Close tab"><TabCross /></PlainButton></PageTab>
        <PageTab $w={141} $active><PageTabIcon><Nodes /></PageTabIcon><PageTabLabel>(20) Project</PageTabLabel><PlainButton aria-label="Close tab"><TabCross /></PlainButton></PageTab>
      </PageTabs>
      <Desk>
        <Strip $w={21} $right={4}><Arrow /></Strip>
        <SideBar>
          <SideHead><Nodes size={28} /><SideTitle>Project</SideTitle></SideHead>
          <LoadButton><FaCloudDownloadAlt size={28} /><ToolLabel>Load</ToolLabel></LoadButton>
          <SideItem>Project and activities</SideItem>
          <SideFoot>
            <SideRow>
              <Field $w={127}><FieldInput $pad={4} placeholder="Find" aria-label="Find" /></Field>
              <PlainButton aria-label="Help"><Help w={11} h={15} /></PlainButton>
            </SideRow>
            <SideRow $l={5} $r={8}>
              <Tool icon={<FaEdit size={16} />} label="Edit" gap={1} />
              <Tool icon={<Plus size={12} />} label="Widgets" />
            </SideRow>
          </SideFoot>
        </SideBar>
        <Boards>
          <Board><BoardHead><GridIcon w={13} h={13} />Project browsing project</BoardHead></Board>
          <Board><BoardHead><GridIcon w={13} h={13} />Project staff</BoardHead><Donut /></Board>
          <Board>
            <BoardHead />
            <Scroll>
              <Sheet>
                <colgroup>{[41, 60, 167, 69, 85, 431].map((w, i) => <col key={i} width={w} />)}</colgroup>
                <thead><tr>{[0, 1, 2, 3, 4, 5].map((i) => <th key={i} />)}</tr></thead>
                <tbody>
                  {sheetRows.map((r, i) => (
                    <SheetRow key={i} $tint={i > 12 && r[2] !== "" && r[0] === ""}>
                      <th>{i + 1}</th>
                      <SheetCell $right>{r[0] && <SheetLink href="#row">{r[0]}</SheetLink>}</SheetCell>
                      <SheetCell>{r[1]}</SheetCell>
                      <SheetCell $right>{r[2] && <SheetLink href="#dept">{r[2]}</SheetLink>}</SheetCell>
                      <SheetCell>{r[3]}</SheetCell>
                      <SheetCell />
                    </SheetRow>
                  ))}
                </tbody>
              </Sheet>
            </Scroll>
            <HScroll><Tri $dir="left" /></HScroll>
          </Board>
          <Board><BoardHead /></Board>
        </Boards>
      </Desk>
      <DatasetDialog />
      <ParamsetDialog />
    </Screen>
  );
}
